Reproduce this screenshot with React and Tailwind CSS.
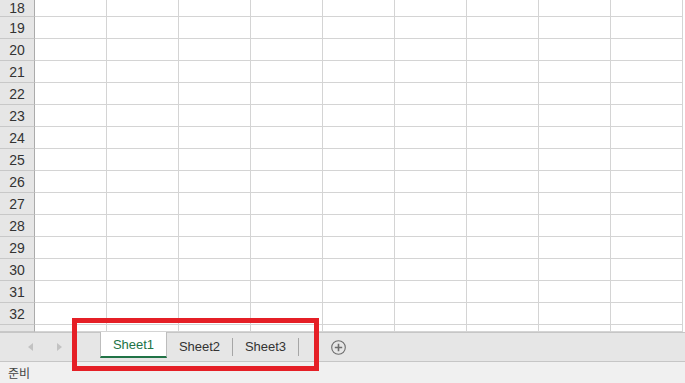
const ROWS = Array.from({ length: 14 }, (_, i) => 19 + i);
const COLS = Array.from({ length: 9 }, (_, i) => i);

function GridRow({ n, height = 'h-[22px]', align = 'items-center', label = true }) {
  return (
    <div className={`flex shrink-0 ${height}`}>
      <div
        className={`flex w-[35px] shrink-0 justify-center border-r border-b border-r-[#ababab] border-b-[#c8c8c8] bg-[#e6e6e6] pt-px text-[14px] leading-[16px] text-[#333] ${align}`}
      >
        {label ? n : null}
      </div>
      {COLS.map((c) => (
        <div key={c} className="w-[72px] shrink-0 border-r border-b border-[#d4d4d4] bg-white" />
      ))}
    </div>
  );
}

function Tab({ label, active = false }) {
  if (active) {
    return (
      <div className="-mt-px flex h-[26px] w-[67px] items-center justify-center border-x border-[#bdbdbd] border-b-2 border-b-[#217346] bg-white pt-[2px] text-[13px] text-[#217346]">
        {label}
      </div>
    );
  }
  return (
    <div className="flex h-[26px] w-[65px] items-center justify-center pt-[2px] text-[13px] text-[#333]">
      {label}
    </div>
  );
}

export default function App() {
  return (
    <div className="relative flex h-[383px] w-[685px] flex-col overflow-hidden bg-white font-['Liberation_Sans','Noto_Sans_CJK_KR',sans-serif]">
      <div className="flex h-[332px] shrink-0 flex-col overflow-hidden">
        <GridRow n={18} height="h-[17px]" align="items-end" />
        {ROWS.map((n) => (
          <GridRow key={n} n={n} />
        ))}
        <GridRow n={33} height="h-[7px]" label={false} />
      </div>

      <div className="flex h-[30px] shrink-0 items-start border-y border-[#c6c6c6] bg-[#e6e6e6]">
        <div className="flex h-[28px] w-[100px] items-center gap-[24px] pl-[28px]">
          <svg width="5" height="8" viewBox="0 0 5 8">
            <path d="M5 0 L0 4 L5 8 Z" fill="#c2c2c2" />
          </svg>
          <svg width="5" height="8" viewBox="0 0 5 8">
            <path d="M0 0 L5 4 L0 8 Z" fill="#c2c2c2" />
          </svg>
        </div>
        <Tab label="Sheet1" active />
        <Tab label="Sheet2" />
        <div className="mt-[5px] h-[18px] w-px bg-[#a6a6a6]" />
        <Tab label="Sheet3" />
        <div className="mt-[5px] h-[18px] w-px bg-[#a6a6a6]" />
        <div className="ml-[32px] flex h-[28px] items-center">
          <svg width="15" height="15" viewBox="0 0 15 15">
            <circle cx="7.5" cy="7.5" r="6.8" fill="none" stroke="#6d6d6d" strokeWidth="1.1" />
            <path d="M7.5 3.8 V11.2 M3.8 7.5 H11.2" stroke="#6d6d6d" strokeWidth="1.6" />
          </svg>
        </div>
      </div>

      <div className="flex flex-1 items-center bg-[#f0f0f0] pl-[8px] text-[12px] text-[#444] font-['Noto_Sans_CJK_KR',sans-serif]">
        준비
      </div>

      <div className="pointer-events-none absolute left-[72px] top-[318px] h-[53px] w-[247px] border-[5px] border-[#e51f26]" />
    </div>
  );
}
